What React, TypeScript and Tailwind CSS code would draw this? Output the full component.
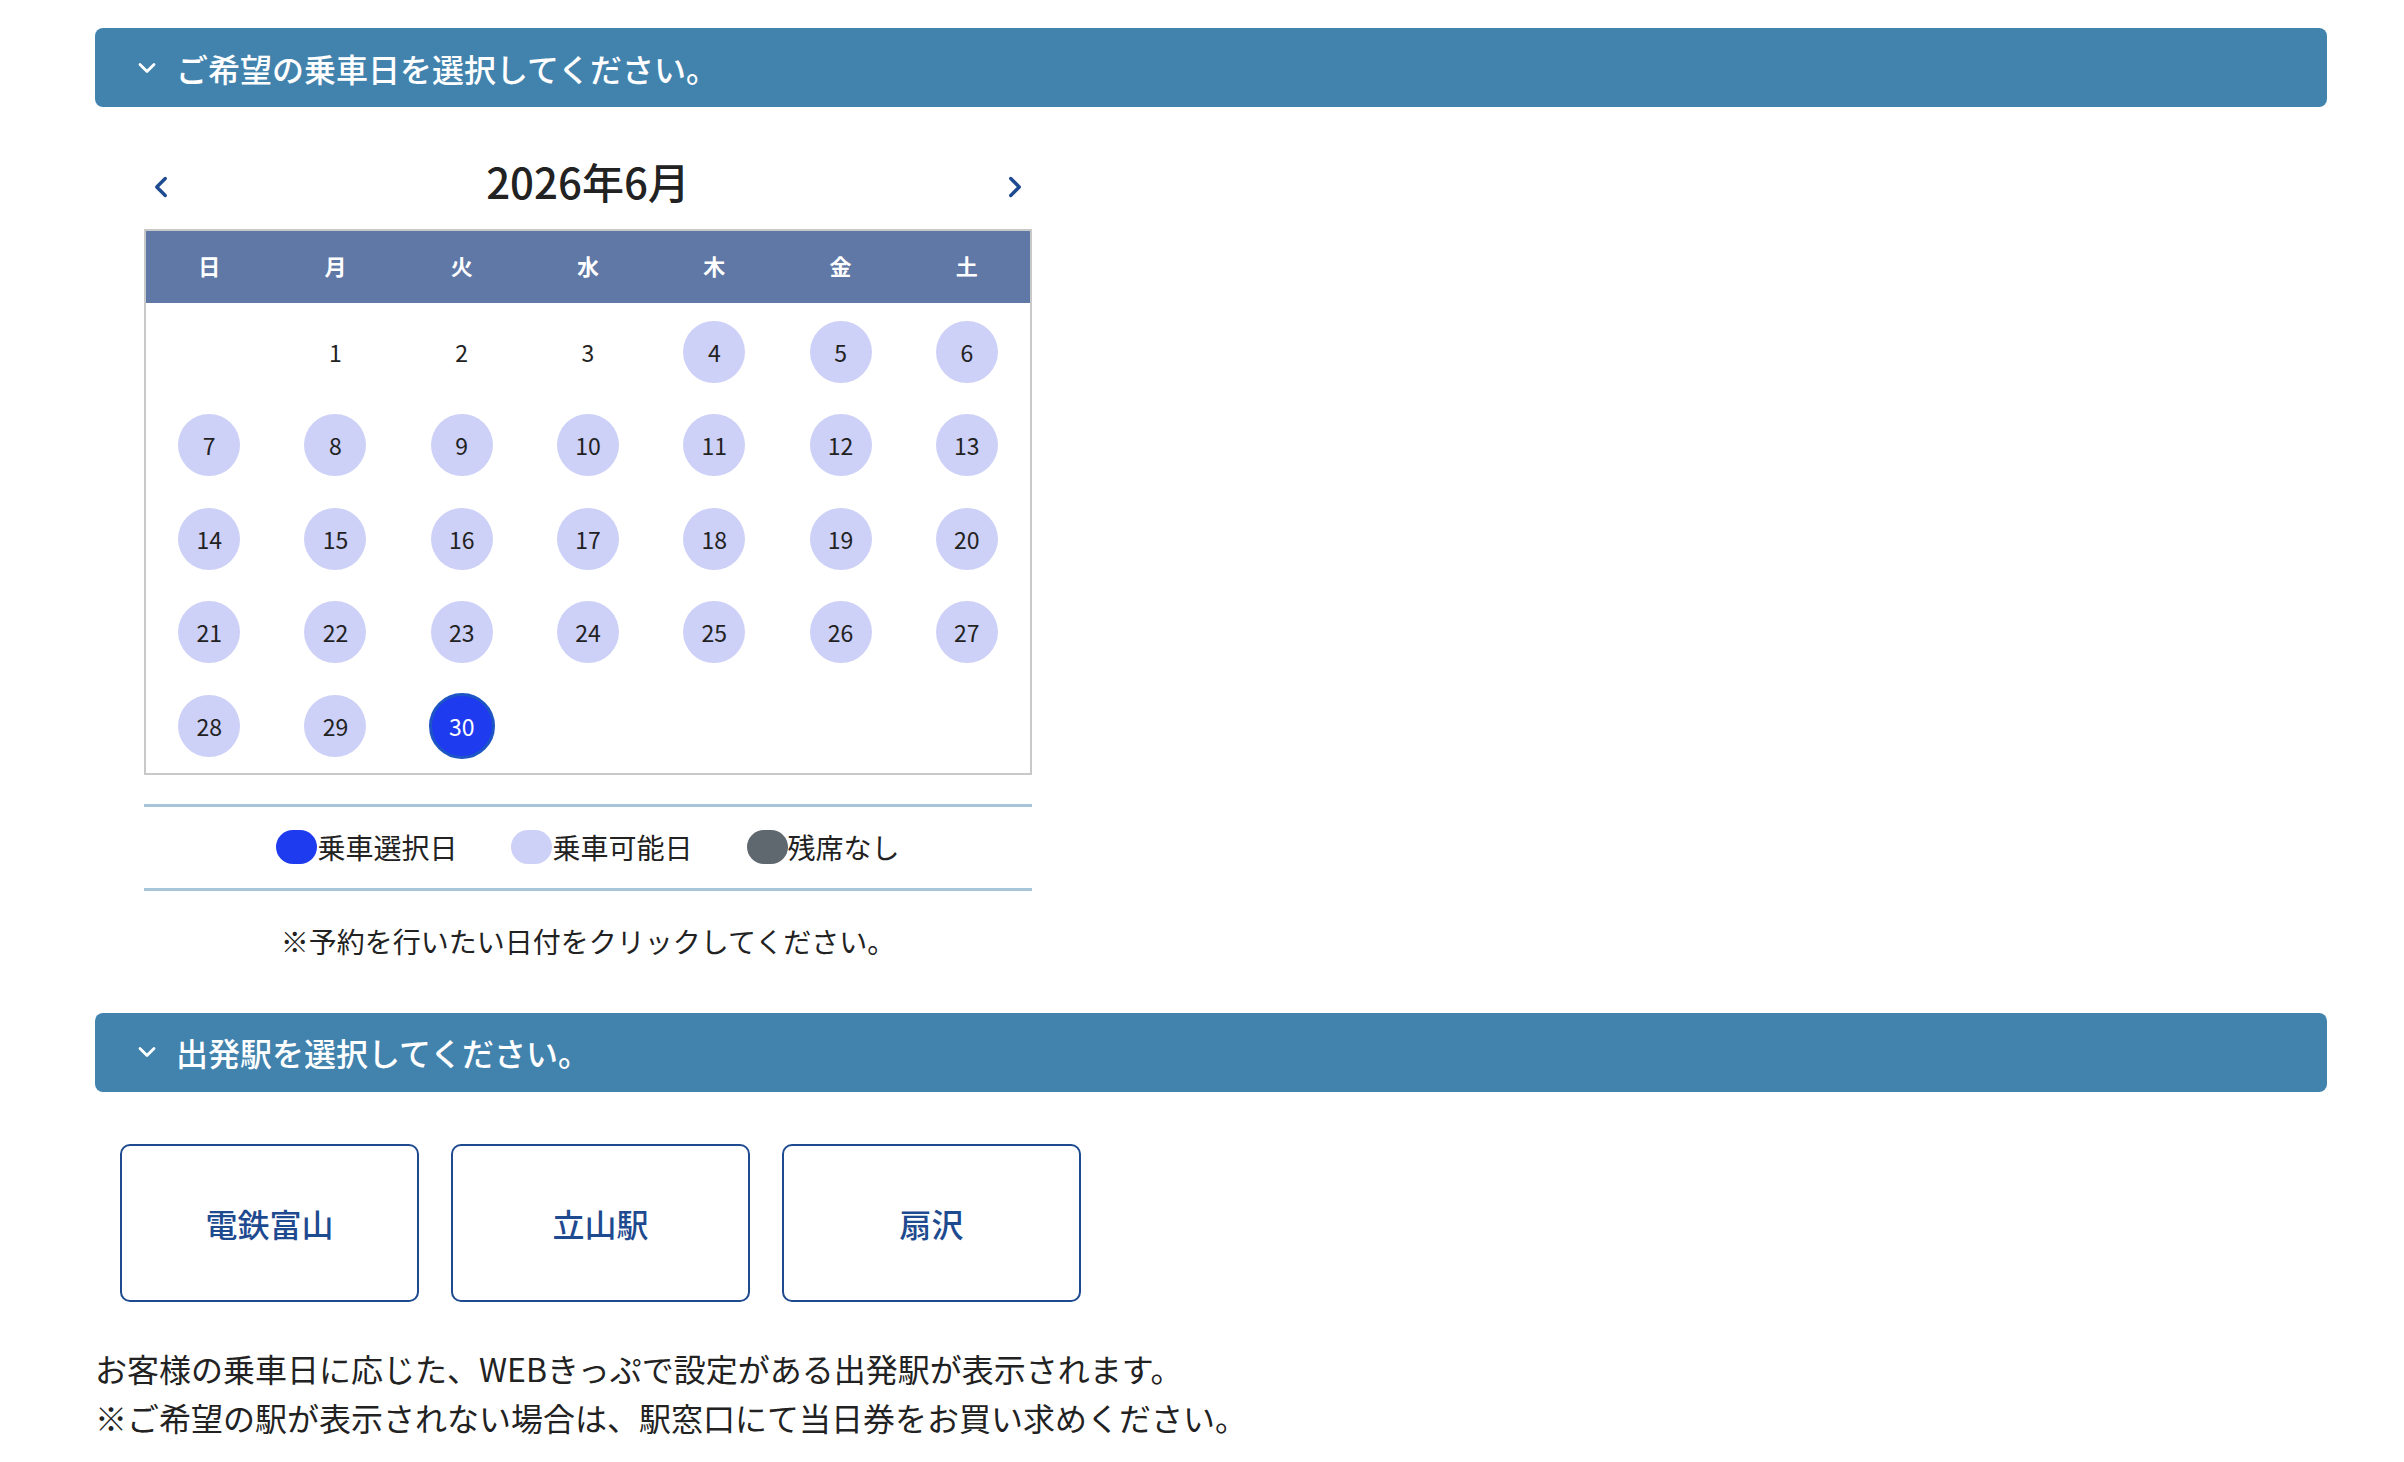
import { ChevronDown, ChevronLeft, ChevronRight } from "lucide-react"

const weekdays = ["日", "月", "火", "水", "木", "金", "土"]

// June 2026 starts on Monday; 1-3 are not bookable, 30 is selected
const cells: (number | null)[] = [null, ...Array.from({ length: 30 }, (_, i) => i + 1)]
while (cells.length % 7 !== 0) cells.push(null)
const weeks: (number | null)[][] = []
for (let i = 0; i < cells.length; i += 7) weeks.push(cells.slice(i, i + 7))

const selected = 30
const stations = ["電鉄富山", "立山駅", "扇沢"]

function SectionHeader({ title }: { title: string }) {
  return (
    <div className="flex h-[79px] items-center gap-[15px] rounded-[8px] bg-[#4283ae] pl-[38px] text-white">
      <ChevronDown className="size-[28px]" strokeWidth={2.4} />
      <span className="text-[32px] font-medium leading-none">{title}</span>
    </div>
  )
}

function Day({ day }: { day: number }) {
  if (day < 4) {
    return <span className="text-[23px] text-[#222]">{day}</span>
  }
  if (day === selected) {
    return (
      <span className="flex size-[66px] items-center justify-center rounded-full border-[3px] border-[#1d55c4] bg-[#1f3bef] text-[23px] text-white">
        {day}
      </span>
    )
  }
  return (
    <span className="flex size-[62px] items-center justify-center rounded-full bg-[#cdd0f7] text-[23px] text-[#222]">
      {day}
    </span>
  )
}

export default function App() {
  return (
    <div className="min-h-screen bg-white pl-[95px] pr-[77px] pt-[28px] font-['Noto_Sans_CJK_JP',sans-serif] text-[#222]">
      <SectionHeader title="ご希望の乗車日を選択してください。" />

      <div className="ml-[49px] w-[888px]">
        <div className="mt-[44px] mb-[18px] flex h-[60px] items-center justify-between">
          <ChevronLeft className="mt-[12px] size-[34px] text-[#1e4a8f]" strokeWidth={2.4} />
          <h2 className="text-[42px] font-medium leading-none">2026年6月</h2>
          <ChevronRight className="mt-[12px] size-[34px] text-[#1e4a8f]" strokeWidth={2.4} />
        </div>

        <div className="border-2 border-[#c8c8c8]">
          <div className="grid h-[72px] grid-cols-7 items-center bg-[#5f78a6]">
            {weekdays.map((w) => (
              <span key={w} className="pb-[4px] text-center text-[22px] font-bold text-white">
                {w}
              </span>
            ))}
          </div>
          <div className="pt-[2px]">
            {weeks.map((week, wi) => (
              <div key={wi} className="grid h-[93.5px] grid-cols-7 items-center">
                {week.map((d, di) => (
                  <div key={di} className="flex items-center justify-center">
                    {d && <Day day={d} />}
                  </div>
                ))}
              </div>
            ))}
          </div>
        </div>

        <div className="mt-[29px] flex h-[87px] items-center justify-center gap-[54px] border-y-[3px] border-[#a7c5d8] text-[28px]">
          <div className="flex items-center">
            <span className="h-[34px] w-[41px] rounded-full bg-[#1f3bef]" />
            <span>乗車選択日</span>
          </div>
          <div className="flex items-center">
            <span className="h-[34px] w-[41px] rounded-full bg-[#cdd0f7]" />
            <span>乗車可能日</span>
          </div>
          <div className="flex items-center">
            <span className="h-[34px] w-[41px] rounded-full bg-[#5f676f]" />
            <span>残席なし</span>
          </div>
        </div>

        <p className="mt-[29px] mb-[51px] text-center text-[28px] leading-[42px]">
          ※予約を行いたい日付をクリックしてください。
        </p>
      </div>

      <SectionHeader title="出発駅を選択してください。" />

      <div className="mt-[52px] flex gap-[32px] pl-[25px]">
        {stations.map((s) => (
          <button
            key={s}
            className="flex h-[158px] w-[299px] items-center justify-center rounded-[10px] border-2 border-[#1e4a8f] bg-white text-[32px] font-medium text-[#1e4a8f]"
          >
            {s}
          </button>
        ))}
      </div>

      <div className="mt-[42px] text-[32px] leading-[49px]">
        <p>お客様の乗車日に応じた、WEBきっぷで設定がある出発駅が表示されます。</p>
        <p>※ご希望の駅が表示されない場合は、駅窓口にて当日券をお買い求めください。</p>
      </div>
    </div>
  )
}
